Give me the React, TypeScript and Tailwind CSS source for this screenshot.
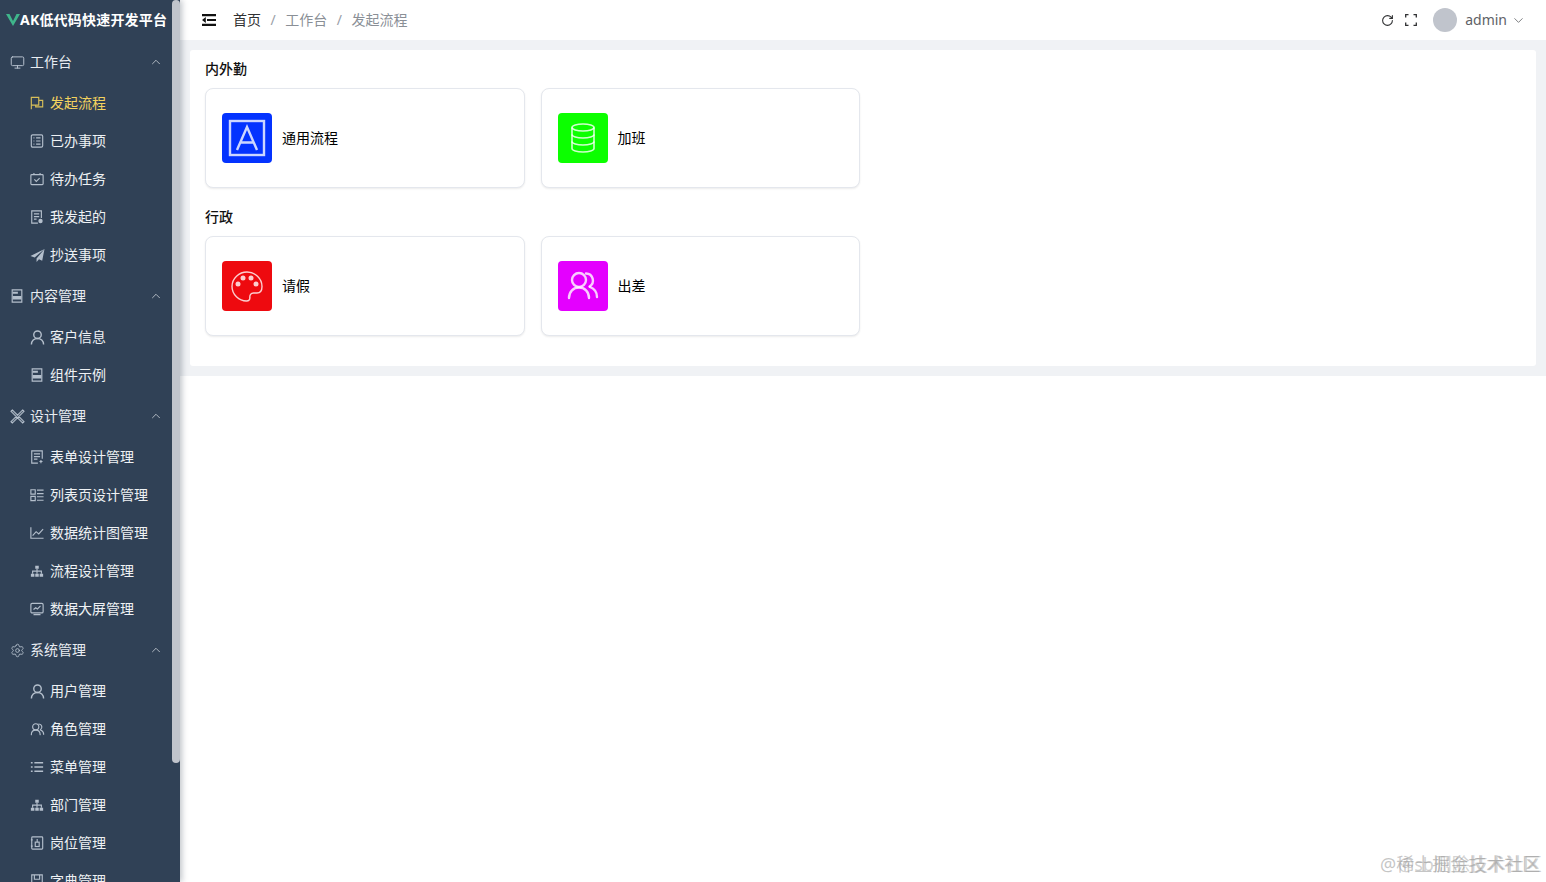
import type { ReactNode } from 'react';
import { ChevronDown, ChevronUp, Monitor, RotateCw, Settings } from 'lucide-react';

const FONT = 'font-["Noto_Sans","Noto_Sans_CJK_SC",sans-serif]';

function Ico({ children, size = 14 }: { children: ReactNode; size?: number }) {
  return (
    <svg width={size} height={size} viewBox="0 0 16 16" fill="none" stroke="currentColor" strokeWidth="1.3" className="shrink-0">
      {children}
    </svg>
  );
}

const FlagIcon = () => (
  <Ico>
    <path d="M1.5 15V1.5h8.5v9H1.5M10 5h4.5v7.5H6.5v-2" />
  </Ico>
);
const ListDoc = () => (
  <Ico>
    <rect x="1.5" y="1" width="13" height="14" rx="1.5" />
    <path d="M7 4.5h5M7 8h5M7 11.5h5M4 4.5h1M4 8h1M4 11.5h1" />
  </Ico>
);
const CalendarCheck = () => (
  <Ico>
    <rect x="1" y="3" width="14" height="11.5" rx="1" />
    <path d="M4.5 1v2M11.5 1v2M5 8.5l2.2 2.2L11 7" />
  </Ico>
);
const MyDoc = () => (
  <Ico>
    <path d="M9 15H2V1h11v8" />
    <path d="M4.5 4.5h6M4.5 7.5h6M4.5 10.5h3" />
    <circle cx="12" cy="12.5" r="2.5" fill="currentColor" stroke="none" />
  </Ico>
);
const PaperPlane = () => (
  <Ico size={15}>
    <path d="M15.5 1L0.5 8.5l4.5 1.6L15.5 1 7 11.2V15l2.6-3L13 13.5z" fill="currentColor" stroke="none" />
  </Ico>
);
const Floppy = () => (
  <Ico>
    <path d="M2.5 1h11v14h-11z" />
    <path d="M3 8h10v4H3zM3 3h6v2.5H3z" fill="currentColor" stroke="none" />
  </Ico>
);
const Tools = () => (
  <Ico size={15}>
    <path d="M2.5 1L15 13.5 13.5 15 1 2.5zM13.5 1L15 2.5 2.5 15 1 13.5z" fill="currentColor" fillOpacity="0.25" strokeWidth="1.1" />
  </Ico>
);
const FormDoc = () => (
  <Ico>
    <path d="M9 15H2V1h12v9" />
    <path d="M4.5 4.5h7M4.5 7.5h7M4.5 10.5h4M12.5 11.5v3.5M10.8 13.2h3.5" />
  </Ico>
);
const ListGrid = () => (
  <Ico>
    <path d="M1 2h5v5H1zM1 9.5h5v5H1zM8 2.5h7.5M8 6.5h7.5M8 10h7.5M8 14h7.5" />
  </Ico>
);
const LineChart = () => (
  <Ico>
    <path d="M1 1.5V14h14.5M3 11l4-4.5 3 2.5 5-5.5" />
  </Ico>
);
const OrgTree = () => (
  <Ico>
    <path d="M6 2h4v3.5H6zM1 11h4v3.5H1zM6 11h4v3.5H6zM11 11h4v3.5h-4z" fill="currentColor" stroke="none" />
    <path d="M8 5.5V11M3 11V8.2h10V11" />
  </Ico>
);
const ScreenChart = () => (
  <Ico>
    <rect x="1" y="1.5" width="14" height="11" rx="1.5" />
    <path d="M4 14.5h8M4 8.5l2.5-2 2 1.5L12 4.5" />
  </Ico>
);
const ListBullets = () => (
  <Ico>
    <path d="M5 3.2h10M5 8h10M5 12.8h10M1 3.2h2M1 8h2M1 12.8h2" strokeWidth="1.8" />
  </Ico>
);
const PostBook = () => (
  <Ico>
    <rect x="2" y="1" width="12.5" height="14" rx="1" />
    <rect x="6" y="7" width="4.5" height="5" />
    <path d="M8.2 3.5v3.5M1 4.5h2M1 11.5h2" />
  </Ico>
);
const DictBook = () => (
  <Ico>
    <path d="M2 1h12v14H2z" />
    <path d="M5 1v5h6V1" />
  </Ico>
);

// one person, also used in the menu
const UserIcon = () => (
  <svg width="15" height="15" viewBox="0 0 16 16" fill="none" stroke="currentColor" strokeWidth="1.5" className="shrink-0">
    <circle cx="8" cy="5" r="4" />
    <path d="M1.5 15.5c0-4 3-6.5 6.5-6.5s6.5 2.5 6.5 6.5" />
  </svg>
);

const PeopleIcon = ({ size, width }: { size: number; width: number }) => (
  <svg width={size} height={size} viewBox="0 0 34 34" fill="none" stroke="currentColor" strokeWidth={width} strokeLinecap="round" className="shrink-0">
    <circle cx="13" cy="11" r="7" />
    <path d="M3 29c0-6.500 4.500-10.500 10-10.500s10 4 10 10.500" />
    <path d="M20 4.500a7 7 0 0 1 3.500 13" />
    <path d="M24 18c4 1.500 7 5 7 10" />
  </svg>
);

const MENU = [
  {
    title: '工作台',
    icon: <Monitor size={15} strokeWidth={1.6} />,
    items: [
      { label: '发起流程', icon: <FlagIcon />, active: true },
      { label: '已办事项', icon: <ListDoc /> },
      { label: '待办任务', icon: <CalendarCheck /> },
      { label: '我发起的', icon: <MyDoc /> },
      { label: '抄送事项', icon: <PaperPlane /> },
    ],
  },
  {
    title: '内容管理',
    icon: <Floppy />,
    items: [
      { label: '客户信息', icon: <UserIcon /> },
      { label: '组件示例', icon: <Floppy /> },
    ],
  },
  {
    title: '设计管理',
    icon: <Tools />,
    items: [
      { label: '表单设计管理', icon: <FormDoc /> },
      { label: '列表页设计管理', icon: <ListGrid /> },
      { label: '数据统计图管理', icon: <LineChart /> },
      { label: '流程设计管理', icon: <OrgTree /> },
      { label: '数据大屏管理', icon: <ScreenChart /> },
    ],
  },
  {
    title: '系统管理',
    icon: <Settings size={15} strokeWidth={1.4} />,
    items: [
      { label: '用户管理', icon: <UserIcon /> },
      { label: '角色管理', icon: <PeopleIcon size={15} width={2.6} /> },
      { label: '菜单管理', icon: <ListBullets /> },
      { label: '部门管理', icon: <OrgTree /> },
      { label: '岗位管理', icon: <PostBook /> },
      { label: '字典管理', icon: <DictBook /> },
    ],
  },
];

const SECTIONS = [
  {
    title: '内外勤',
    cards: [
      {
        name: '通用流程',
        bg: 'bg-[#0433ff]',
        icon: (
          <svg width="38" height="38" viewBox="0 0 38 38" fill="none" stroke="currentColor" strokeWidth="2.4">
            <rect x="2" y="2" width="34" height="34" />
            <path d="M9 31L19 8l10 23M12.500 23.500h13" />
          </svg>
        ),
      },
      {
        name: '加班',
        bg: 'bg-[#0cff00]',
        icon: (
          <svg width="24" height="30" viewBox="0 0 24 30" fill="none" stroke="currentColor" strokeWidth="1.6">
            <ellipse cx="12" cy="4.500" rx="11" ry="3.500" />
            <path d="M1 4.500v21c0 2 5 3.500 11 3.500s11-1.500 11-3.500v-21" />
            <path d="M1 11.500c0 2 5 3.500 11 3.500s11-1.500 11-3.500M1 18.500c0 2 5 3.500 11 3.500s11-1.500 11-3.500" />
          </svg>
        ),
      },
    ],
  },
  {
    title: '行政',
    cards: [
      {
        name: '请假',
        bg: 'bg-[#ee0a0f]',
        icon: (
          <svg width="34" height="34" viewBox="0 0 34 34" fill="none" stroke="currentColor" strokeWidth="1.4">
            <path d="M17 3C9 3 2 9.500 2 17.500S9 32 16.500 32c2.500 0 3.500-1.500 3.300-3.300-.2-2.500 1-4.700 3.700-4.700h3.500c3 0 5-2.500 5-6.500C32 9.500 25 3 17 3z" />
            <g fill="currentColor" stroke="none">
              <circle cx="8" cy="15" r="2.500" />
              <circle cx="13" cy="9" r="2.500" />
              <circle cx="21" cy="9" r="2.500" />
              <circle cx="26" cy="15" r="2.500" />
            </g>
          </svg>
        ),
      },
      { name: '出差', bg: 'bg-[#e400ff]', icon: <PeopleIcon size={34} width={2.4} /> },
    ],
  },
];

function Sidebar() {
  return (
    <aside className="relative z-10 h-full w-[180px] shrink-0 overflow-hidden bg-[#304156] shadow-[2px_0_6px_rgba(0,21,41,0.25)]">
      <div className="flex h-10 items-center pl-[6px]">
        <svg width="14" height="12" viewBox="0 0 14 12" className="shrink-0">
          <path d="M0 0h3.500L7 7l3.500-7H14L7 12z" fill="#3fb68b" />
        </svg>
        <span className="whitespace-nowrap text-sm font-bold tracking-[0.2px] text-white">AK低代码快速开发平台</span>
      </div>
      {MENU.map(group => (
        <div key={group.title}>
          <div className="flex h-11 items-center pl-[10px] pr-[17px] text-[#e8ecf1]">
            <span className="flex w-[20px] text-[#b4bfcc]">{group.icon}</span>
            <span className="flex-1 text-sm">{group.title}</span>
            <ChevronUp size={14} strokeWidth={1.3} className="text-[#d5dae1]" />
          </div>
          {group.items.map(item => (
            <div key={item.label} className={`flex h-[38px] items-center pl-[30px] text-sm ${item.active ? 'text-[#f4d35e]' : 'text-[#eef1f4]'}`}>
              <span className={`flex w-[20px] ${item.active ? 'text-[#d8bf58]' : 'text-[#b4bfcc]'}`}>{item.icon}</span>
              <span className="whitespace-nowrap">{item.label}</span>
            </div>
          ))}
        </div>
      ))}
      <div className="absolute right-0 top-0 h-[763px] w-2 rounded-full bg-[#c0c4cc]" />
    </aside>
  );
}

function Navbar() {
  return (
    <header className="flex h-10 shrink-0 items-center bg-white pl-[22px] pr-[20px] text-sm">
      <svg width="14" height="12" viewBox="0 0 14 12" fill="#111" className="shrink-0">
        <path d="M0 0h14v2.200H0zM5 4.900h9v2.200H5zM0 9.800h14V12H0zM3.800 3v6L0 6z" />
      </svg>
      <nav className="ml-[17px] flex items-center">
        <span className="text-[#303133]">首页</span>
        <span className="mx-[9.5px] text-[#9aa0a8]">/</span>
        <span className="text-[#8a8f96]">工作台</span>
        <span className="mx-[9.5px] text-[#9aa0a8]">/</span>
        <span className="text-[#8a8f96]">发起流程</span>
      </nav>
      <div className="ml-auto flex items-center">
        <RotateCw size={13} strokeWidth={2} className="text-[#303133]" />
        <svg width="12" height="12" viewBox="0 0 12 12" fill="none" stroke="#303133" strokeWidth="1.3" className="ml-[11px]">
          <path d="M0.700 3.500V0.700h2.800M8.500 0.700h2.800v2.800M11.300 8.500v2.800H8.500M3.500 11.300H0.700V8.500" />
        </svg>
        <span className="ml-[16px] h-6 w-6 rounded-full bg-[#c0c4cc]" />
        <span className="ml-2 text-[#606266]">admin</span>
        <ChevronDown size={15} strokeWidth={1.3} className="ml-[4px] text-[#606266]" />
      </div>
    </header>
  );
}

export default function App() {
  return (
    <div className={`relative flex h-screen w-full overflow-hidden bg-white ${FONT}`}>
      <Sidebar />
      <main className="flex min-w-0 flex-1 flex-col">
        <Navbar />
        <div className="bg-[#f0f2f5] p-2.5">
          <div className="rounded-[3px] bg-white px-[15px] pb-5">
            {SECTIONS.map(section => (
              <section key={section.title} className="pb-2.5">
                <h2 className="flex h-[38px] items-center text-sm font-medium text-[#111]">{section.title}</h2>
                <div className="flex gap-4">
                  {section.cards.map(card => (
                    <div key={card.name} className="flex h-[100px] w-[319.5px] items-center gap-2.5 rounded-lg border border-[#e4e7ed] bg-white pl-4 shadow-[0_1px_2px_rgba(0,0,0,0.08)]">
                      <div className={`flex h-[50px] w-[50px] items-center justify-center rounded-[4px] text-white/80 ${card.bg}`}>{card.icon}</div>
                      <span className="text-sm text-black">{card.name}</span>
                    </div>
                  ))}
                </div>
              </section>
            ))}
          </div>
        </div>
      </main>
      <div className="pointer-events-none absolute bottom-[6px] left-[1380px] whitespace-nowrap text-lg leading-6 text-[#8c8c8c]/50">@稀土掘金技术社区</div>
      <div className="pointer-events-none absolute bottom-[6px] left-[1398px] whitespace-nowrap text-lg leading-6 text-[#8c8c8c]/40">@sb删除技术社区</div>
    </div>
  );
}
